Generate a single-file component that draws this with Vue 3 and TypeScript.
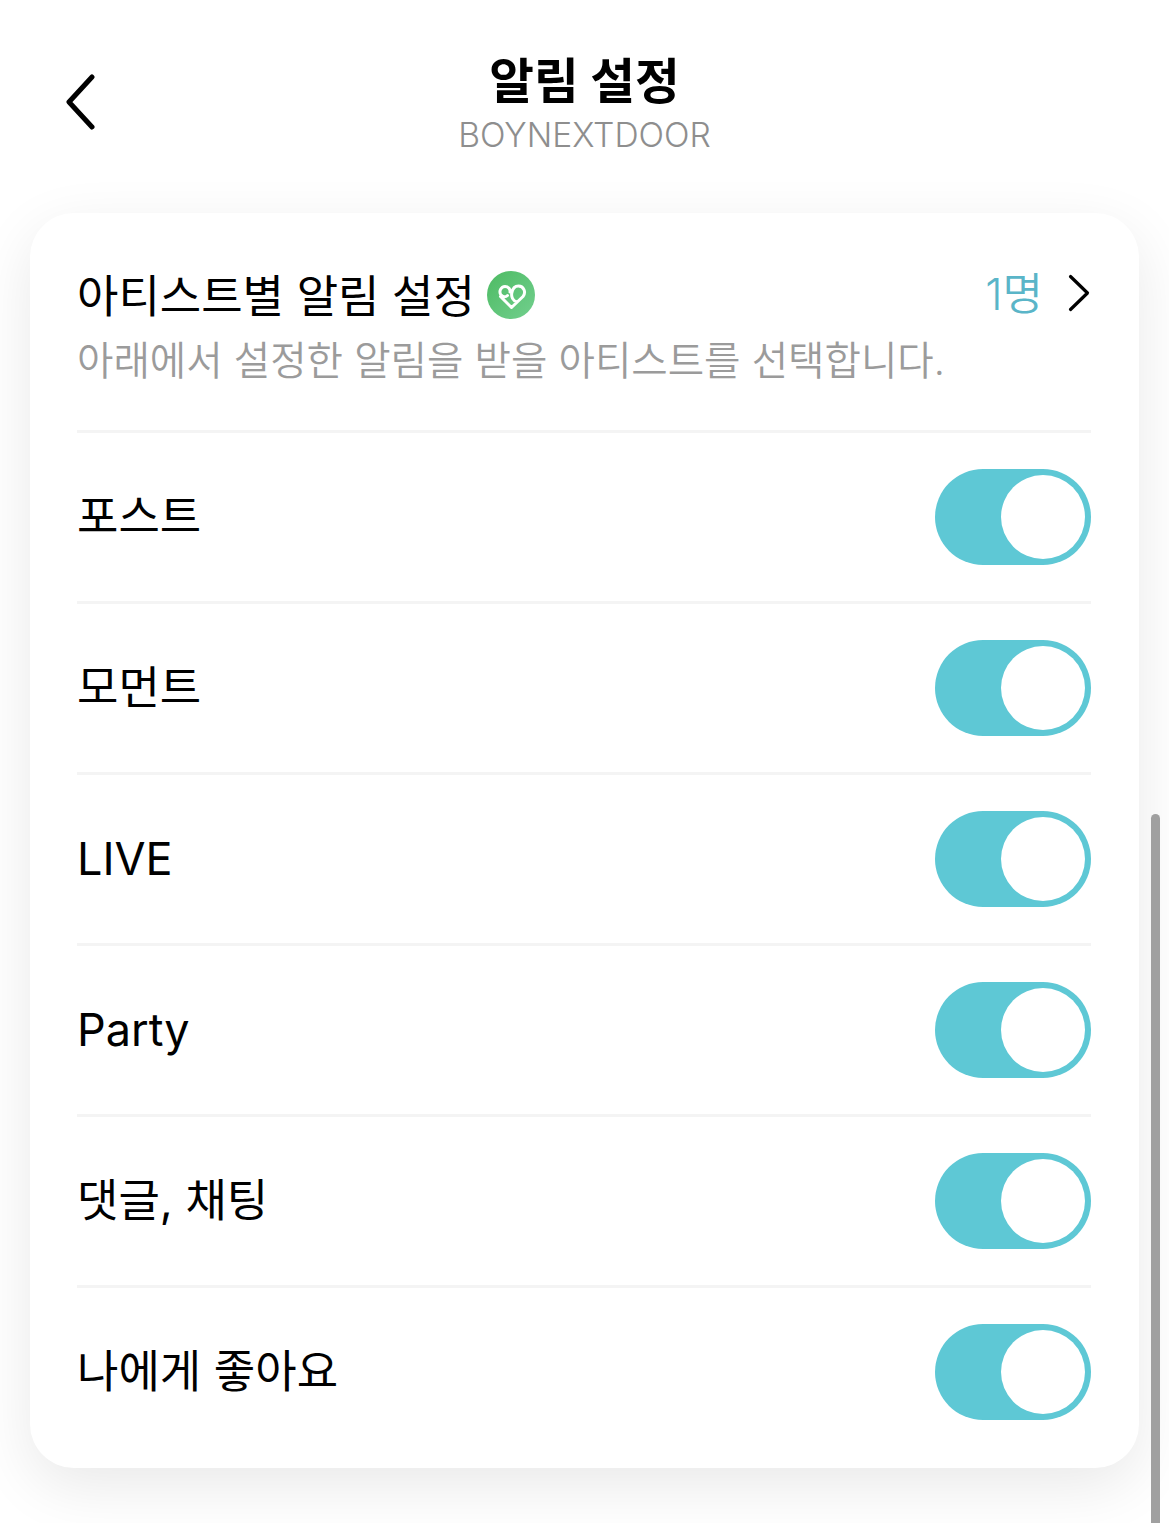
<script setup lang="ts">
const rows: string[] = ['포스트', '모먼트', 'LIVE', 'Party', '댓글, 채팅', '나에게 좋아요']
</script>

<template>
  <div class="page">
    <header class="top">
      <svg class="back" width="32" height="56" viewBox="0 0 32 56" fill="none">
        <path d="M28 3 L5 28 L28 53" stroke="#000" stroke-width="5" stroke-linecap="round" stroke-linejoin="round" />
      </svg>
      <div class="heading">
        <div class="title">알림 설정</div>
        <div class="sub">BOYNEXTDOOR</div>
      </div>
    </header>

    <section class="card">
      <div class="intro">
        <div class="intro-line">
          <div class="intro-title">
            <span>아티스트별 알림 설정</span>
            <svg class="badge" width="48" height="48" viewBox="0 0 48 48" fill="none">
              <defs>
                <linearGradient id="badgeFill" x1="0" y1="0" x2="1" y2="1">
                  <stop offset="0" stop-color="#4dbb63" />
                  <stop offset="1" stop-color="#72cf8e" />
                </linearGradient>
              </defs>
              <circle cx="24" cy="24" r="24" fill="url(#badgeFill)" />
              <path d="M20.5 24.5 C18.5 26.5 15.5 26 14 24 C11.5 20.5 14 15.5 18 15.5 C21.5 15.5 23.5 18.5 23 21 M13.5 25.5 L24.5 36.5 L36 25.5 C39.5 21 36.5 15 31.5 15 C27.5 15 25.5 18 24.8 22 C24 26 26 30 30 31" stroke="#fff" stroke-width="3" stroke-linecap="round" stroke-linejoin="round" />
            </svg>
          </div>
          <div class="count">
            <span>1명</span>
            <svg width="22" height="38" viewBox="0 0 22 38" fill="none">
              <path d="M2.5 2.5 L19.5 19 L2.5 35.5" stroke="#000" stroke-width="3.2" stroke-linecap="round" stroke-linejoin="round" />
            </svg>
          </div>
        </div>
        <p class="intro-desc">아래에서 설정한 알림을 받을 아티스트를 선택합니다.</p>
      </div>

      <div v-for="row in rows" :key="row" class="row">
        <span class="label">{{ row }}</span>
        <span class="toggle"><span class="knob"></span></span>
      </div>
    </section>

    <div class="scrollbar"></div>
  </div>
</template>

<style scoped>
.page {
  position: relative;
  width: 1169px;
  height: 1523px;
  overflow: hidden;
  background: #fff;
  font-family: Inter, "Noto Sans CJK KR", sans-serif;
  color: #000;
}
.top {
  position: relative;
  height: 213px;
  box-sizing: border-box;
  display: flex;
  justify-content: center;
  padding-top: 51px;
}
.back {
  position: absolute;
  left: 64px;
  top: 74px;
}
.heading {
  text-align: center;
}
.title {
  font-size: 48.6px;
  font-weight: 700;
  line-height: 62px;
}
.sub {
  margin-top: 1px;
  font-size: 33.6px;
  font-weight: 300;
  line-height: 42px;
  color: #8e8e8e;
}
.card {
  width: 1109px;
  height: 1255px;
  margin-left: 30px;
  box-sizing: border-box;
  padding: 0 48px 0 47px;
  background: #fff;
  border-radius: 44px;
  box-shadow: 0 18px 60px rgba(0, 0, 0, 0.09);
}
.intro {
  height: 217px;
  box-sizing: border-box;
  padding-top: 50px;
}
.intro-line {
  display: flex;
  justify-content: space-between;
  align-items: center;
  height: 60px;
}
.intro-title {
  display: flex;
  align-items: center;
  gap: 12px;
  font-size: 45px;
  font-weight: 400;
}
.badge {
  margin-top: 4px;
}
.count {
  display: flex;
  align-items: center;
  gap: 25px;
  padding-right: 1px;
  font-size: 44px;
  font-weight: 350;
  color: #5ab5c8;
}
.count span {
  margin-top: -4px;
}
.intro-desc {
  margin: 8px 0 0;
  font-size: 39.6px;
  font-weight: 350;
  line-height: 60px;
  color: #9b9b9b;
}
.row {
  height: 171px;
  box-sizing: border-box;
  border-top: 3px solid #f4f4f4;
  display: flex;
  align-items: center;
  justify-content: space-between;
}
.label {
  font-size: 45px;
  font-weight: 400;
  line-height: 60px;
}
.toggle {
  width: 156px;
  height: 96px;
  box-sizing: border-box;
  padding: 6px;
  border-radius: 48px;
  background: #5ec8d5;
  display: flex;
  justify-content: flex-end;
}
.knob {
  width: 84px;
  height: 84px;
  border-radius: 50%;
  background: #fff;
}
.scrollbar {
  position: absolute;
  left: 1151px;
  top: 814px;
  width: 9px;
  height: 720px;
  border-radius: 5px;
  background: #a0a0a0;
}
</style>
